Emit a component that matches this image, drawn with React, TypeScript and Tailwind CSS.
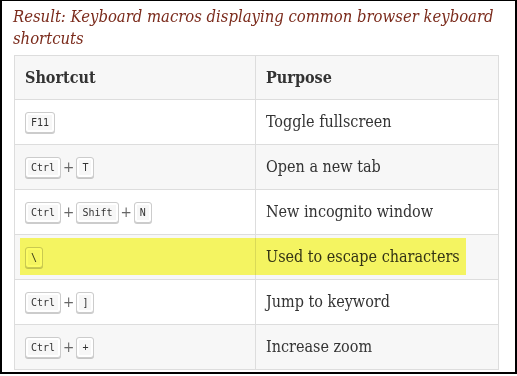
import * as React from "react";

const rows = [
  { keys: ["F11"], purpose: "Toggle fullscreen" },
  { keys: ["Ctrl", "T"], purpose: "Open a new tab" },
  { keys: ["Ctrl", "Shift", "N"], purpose: "New incognito window" },
  { keys: ["\\"], purpose: "Used to escape characters" },
  { keys: ["Ctrl", "]"], purpose: "Jump to keyword" },
  { keys: ["Ctrl", "+"], purpose: "Increase zoom" },
];

const Kbd = ({ label }: { label: string }) => (
  <kbd className="inline-block h-[21px] leading-[19px] px-[5px] rounded-[3px] border border-[#ccc] bg-[#f7f7f7] text-[10px] text-[#333] font-['DejaVu_Sans_Mono',monospace] shadow-[0_1px_0_rgba(0,0,0,0.2),inset_0_0_0_2px_#fff]">
    {label}
  </kbd>
);

export default function App() {
  return (
    <div className="w-[517px] h-[374px] bg-white border-t border-l-2 border-r-2 border-b-2 border-black pl-3 font-['DejaVu_Serif_Condensed','DejaVu_Serif',serif]">
      <p className="w-[495px] -ml-px pt-[5px] text-[16.5px] leading-[22px] italic text-[#7b2b1c]">
        Result: Keyboard macros displaying common browser keyboard shortcuts
      </p>
      <div className="relative mt-[5px] w-[485px]">
        <table className="w-full border-collapse text-[16px] text-[#333]">
          <thead>
            <tr className="h-[44px] bg-[#f7f7f7]">
              <th className="w-[241px] border border-[#ddd] px-[10px] text-left font-bold">Shortcut</th>
              <th className="border border-[#ddd] px-[10px] text-left font-bold">Purpose</th>
            </tr>
          </thead>
          <tbody>
            {rows.map((r, i) => (
              <tr key={i} className={i % 2 === 1 ? "h-[45px] bg-[#f7f7f7]" : "h-[45px] bg-white"}>
                <td className="border border-[#ddd] px-[10px]">
                  <div className="flex items-center">
                    {r.keys.map((k, j) => (
                      <React.Fragment key={j}>
                        {j > 0 && <span className="mx-[2px] text-[15px] font-light text-[#666]">+</span>}
                        <Kbd label={k} />
                      </React.Fragment>
                    ))}
                  </div>
                </td>
                <td className="border border-[#ddd] px-[10px]">{r.purpose}</td>
              </tr>
            ))}
          </tbody>
        </table>
        {/* highlighter mark over the escape row */}
        <div className="absolute left-[6px] top-[183px] w-[446px] h-[37px] bg-[#fcfc64] mix-blend-multiply" />
      </div>
    </div>
  );
}
